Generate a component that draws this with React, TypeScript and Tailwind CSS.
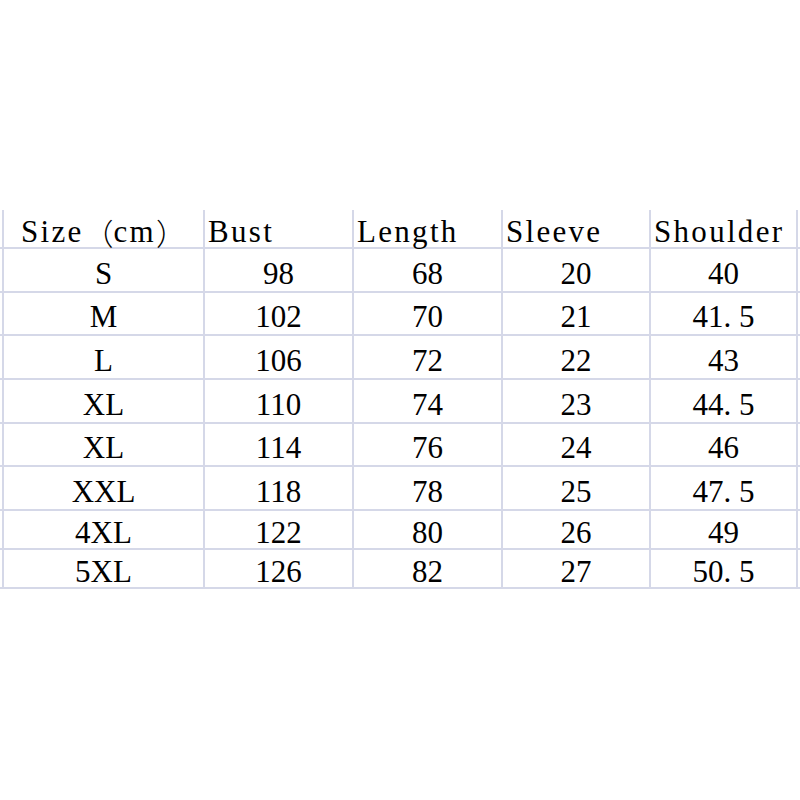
import React from "react";

// size chart rows, as in the original spreadsheet
const headers = ["Bust", "Length", "Sleeve", "Shoulder"];

const rows: { size: string; values: string[]; h: string }[] = [
  { size: "S", values: ["98", "68", "20", "40"], h: "h-[44px]" },
  { size: "M", values: ["102", "70", "21", "41.5"], h: "h-[43px]" },
  { size: "L", values: ["106", "72", "22", "43"], h: "h-[44px]" },
  { size: "XL", values: ["110", "74", "23", "44.5"], h: "h-[44px]" },
  { size: "XL", values: ["114", "76", "24", "46"], h: "h-[43px]" },
  { size: "XXL", values: ["118", "78", "25", "47.5"], h: "h-[44px]" },
  { size: "4XL", values: ["122", "80", "26", "49"], h: "h-[39px]" },
  { size: "5XL", values: ["126", "82", "27", "50.5"], h: "h-[39px]" },
];

const widths = ["w-[201px]", "w-[149px]", "w-[149px]", "w-[148px]", "w-[149px]"];

// the sheet font gives the decimal point a full half-width cell
function Num({ text }: { text: string }) {
  const [a, b] = text.split(".");
  if (b === undefined) return <>{text}</>;
  return (
    <>
      {a}
      <span className="inline-block w-[0.5em]">.</span>
      {b}
    </>
  );
}

const App: React.FC = () => {
  return (
    <div className="w-[800px] h-[800px] bg-white pt-[210px] text-black text-[31px] leading-none font-['Liberation_Serif']">
      <div className="flex h-[39px] pl-[2px] border-b-2 border-[#d5d8e8]">
        <div className={`${widths[0]} border-l-2 border-[#d5d8e8] flex items-center justify-center pt-[6px]`}>
          <span className="tracking-[2.3px]">Size</span>
          <span className="font-['Noto_Sans_CJK_SC'] text-[30px] font-light">（</span>
          <span className="tracking-[2.3px]">cm</span>
          <span className="font-['Noto_Sans_CJK_SC'] text-[30px] font-light">）</span>
        </div>
        {headers.map((h, i) => (
          <div
            key={h}
            className={`${widths[i + 1]} border-l-2 border-[#d5d8e8] flex items-center pl-[3px] pt-[6px] tracking-[2.3px] ${
              i === headers.length - 1 ? "border-r-2" : ""
            }`}
          >
            {h}
          </div>
        ))}
      </div>
      {rows.map((r, idx) => (
        <div key={idx} className={`flex ${r.h} pl-[2px] border-b-2 border-[#d5d8e8]`}>
          <div className={`${widths[0]} border-l-2 border-[#d5d8e8] flex items-center justify-center pt-[6px]`}>
            {r.size}
          </div>
          {r.values.map((v, i) => (
            <div
              key={i}
              className={`${widths[i + 1]} border-l-2 border-[#d5d8e8] flex items-center justify-center pt-[6px] ${
                i === r.values.length - 1 ? "border-r-2" : ""
              }`}
            >
              <Num text={v} />
            </div>
          ))}
        </div>
      ))}
    </div>
  );
};

export default App;
